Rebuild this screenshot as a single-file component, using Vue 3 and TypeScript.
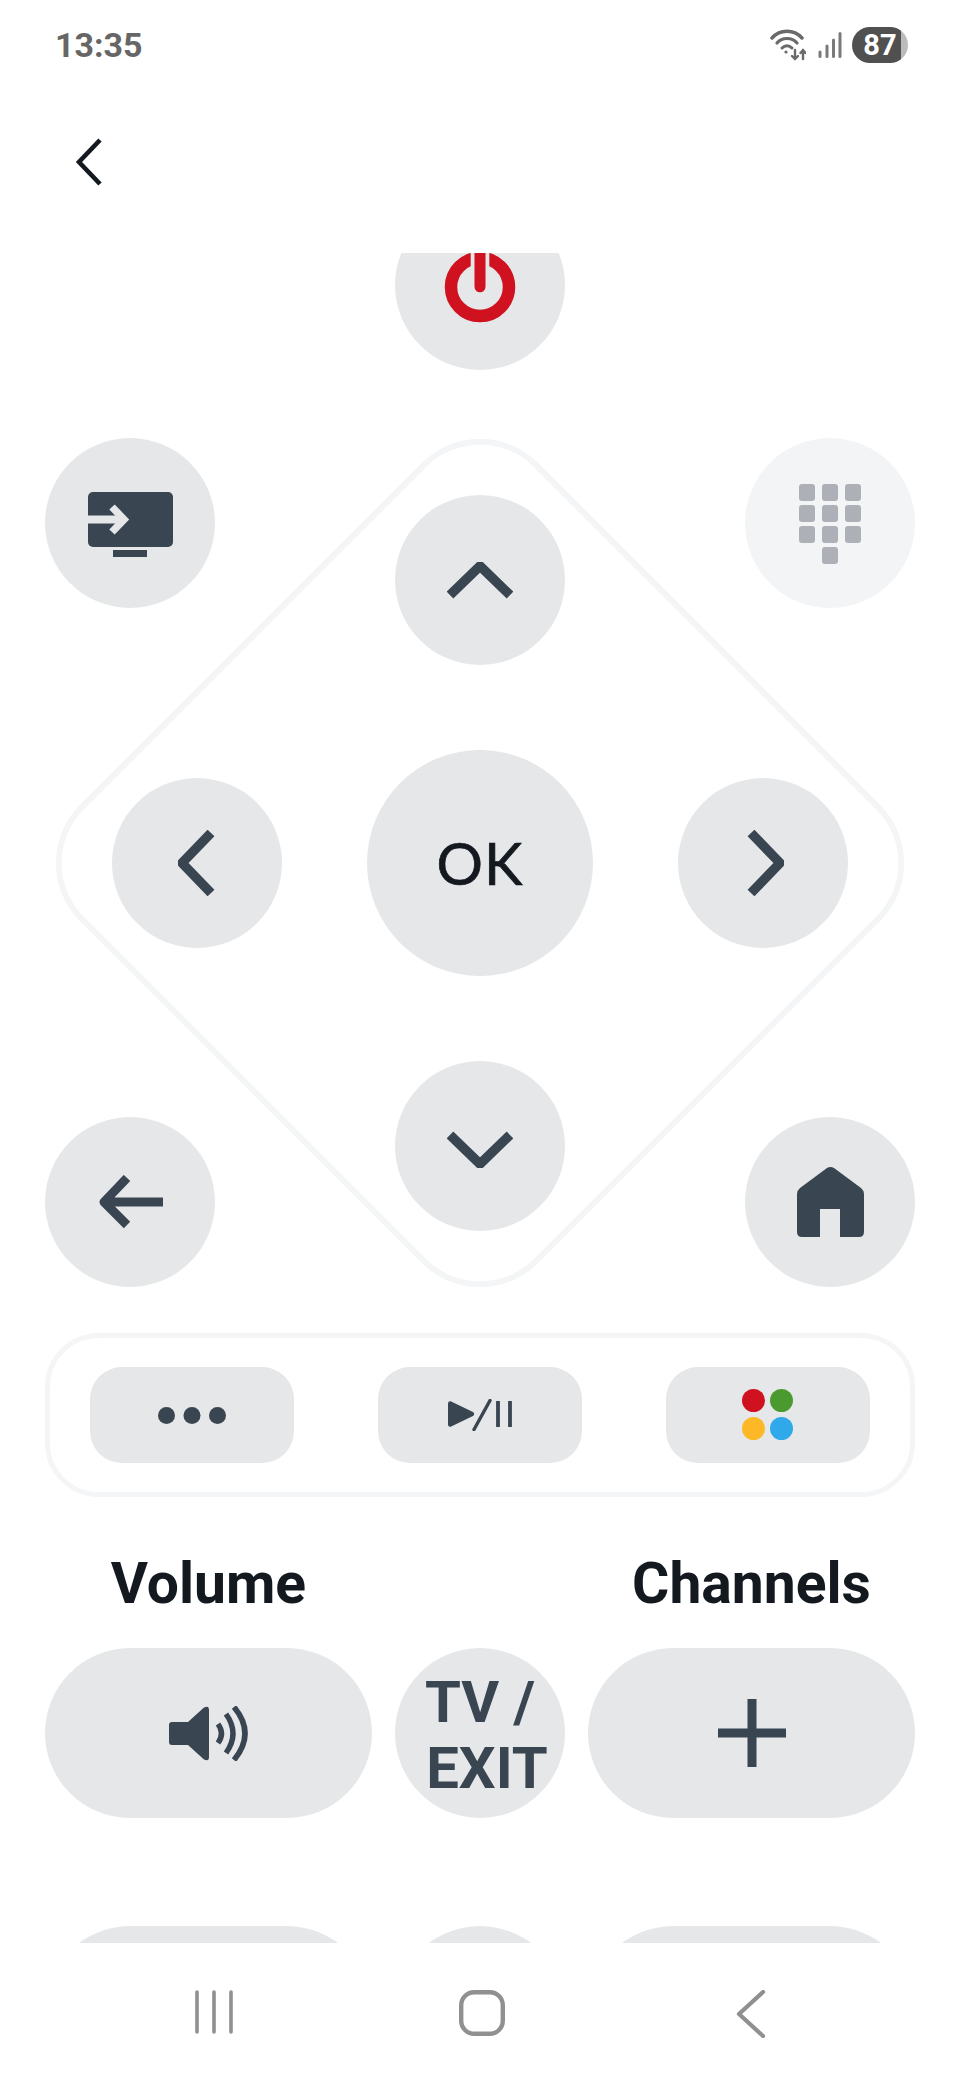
<template>
  <div class="screen">
    <div class="status-bar">
      <span class="clock">13:35</span>
      <div class="status-icons">
        <svg class="wifi" width="36" height="32" viewBox="0 0 36 32" fill="none" stroke="#6a6a6a" stroke-linecap="round">
          <path d="M2 9 C10 0 24 0 32 9" stroke-width="3.4" />
          <path d="M7 14 C12 8 22 8 27 14" stroke-width="3.2" />
          <path d="M12 19 C15 16 19 16 22 19" stroke-width="3" />
          <circle cx="16" cy="23" r="1.6" fill="#6a6a6a" stroke="none" />
          <path d="M25 21 V30 M22 27 L25 30 L28 27" stroke-width="2.4" />
          <path d="M33 30 V21 M30.5 24 L33 21 L35.5 24" stroke-width="2.4" />
        </svg>
        <svg class="signal" width="24" height="26" viewBox="0 0 24 26" fill="none" stroke="#7a7a7a" stroke-width="3" stroke-linecap="round">
          <path d="M2 20 V24.5 M9 14 V24.5 M15.5 8 V24.5 M22 1.5 V24.5" />
        </svg>
        <div class="battery"><span>87</span></div>
      </div>
    </div>

    <header class="top-bar">
      <button class="plain-button" type="button" aria-label="Back">
        <svg width="28" height="48" viewBox="0 0 28 48" fill="none" stroke="#14181f" stroke-width="4.6">
          <path d="M25 2 L4 24 L25 46" />
        </svg>
      </button>
    </header>

    <main class="viewport">
      <div class="remote">
        <button class="round-button power" type="button" aria-label="Power">
          <svg width="72" height="72" viewBox="0 0 72 72" fill="none">
            <circle cx="36" cy="36" r="29" stroke="#d0111f" stroke-width="12.5" />
            <rect x="26.7" y="0" width="18.6" height="18" fill="#e5e7e9" />
            <path d="M36 0 V35.8" stroke="#d0111f" stroke-width="11" stroke-linecap="round" />
          </svg>
        </button>

        <div class="pad">
          <div class="pad-outline"></div>

          <button class="round-button corner corner-tl" type="button" aria-label="Source">
            <svg width="85" height="65" viewBox="0 0 85 65" fill="none">
              <rect width="85" height="55" rx="5" fill="#3a4552" />
              <rect x="25" y="58" width="34" height="7" fill="#3a4552" />
              <path d="M0 27.5 H34" stroke="#e5e7e9" stroke-width="8" />
              <path d="M24 15 L36 27.5 L24 40" stroke="#e5e7e9" stroke-width="7.5" />
            </svg>
          </button>
          <button class="round-button corner corner-tr muted" type="button" aria-label="Keypad">
            <svg width="62" height="80" viewBox="0 0 62 80" fill="#adb0b6">
              <rect v-for="key in keypadKeys" :key="key.id" :x="key.x" :y="key.y" width="16" height="17" rx="3" />
            </svg>
          </button>
          <button class="round-button corner corner-bl" type="button" aria-label="Return">
            <svg class="return-icon" width="64" height="54" viewBox="0 0 64 54" fill="none" stroke="#3a4552" stroke-width="9">
              <path d="M28 3 L5 27 L28 50 M5 27 H64" stroke-linejoin="round" />
            </svg>
          </button>
          <button class="round-button corner corner-br" type="button" aria-label="Home">
            <svg width="67" height="70" viewBox="0 0 67 70" fill="#3a4552">
              <path d="M30 1 Q33.5 -1 37 1 L64 21 Q67 23.5 67 27 V65 Q67 70 62 70 H43 V42 H23 V70 H5 Q0 70 0 65 V27 Q0 23.5 3 21 Z" />
            </svg>
          </button>

          <div class="cluster">
            <button class="round-button" type="button" aria-label="Up">
              <svg class="arrow arrow-up" width="38" height="66" viewBox="0 0 38 66" fill="none" stroke="#3a4552" stroke-width="9.5">
                <path d="M33 3 L4 33 L33 63" stroke-linejoin="round" />
              </svg>
            </button>
            <div class="cluster-row">
              <button class="round-button" type="button" aria-label="Left">
                <svg class="arrow" width="38" height="66" viewBox="0 0 38 66" fill="none" stroke="#3a4552" stroke-width="9.5">
                  <path d="M33 3 L4 33 L33 63" stroke-linejoin="round" />
                </svg>
              </button>
              <button class="round-button ok" type="button">OK</button>
              <button class="round-button" type="button" aria-label="Right">
                <svg class="arrow arrow-right" width="38" height="66" viewBox="0 0 38 66" fill="none" stroke="#3a4552" stroke-width="9.5">
                  <path d="M33 3 L4 33 L33 63" stroke-linejoin="round" />
                </svg>
              </button>
            </div>
            <button class="round-button" type="button" aria-label="Down">
              <svg class="arrow arrow-down" width="38" height="66" viewBox="0 0 38 66" fill="none" stroke="#3a4552" stroke-width="9.5">
                <path d="M33 3 L4 33 L33 63" stroke-linejoin="round" />
              </svg>
            </button>
          </div>
        </div>

        <div class="media-bar">
          <button class="media-button" type="button" aria-label="More">
            <svg width="68" height="17" viewBox="0 0 68 17" fill="#3a4552">
              <circle cx="8.5" cy="8.5" r="8.5" />
              <circle cx="34" cy="8.5" r="8.5" />
              <circle cx="59.5" cy="8.5" r="8.5" />
            </svg>
          </button>
          <button class="media-button" type="button" aria-label="Play or pause">
            <svg width="64" height="32" viewBox="0 0 64 32" fill="none" stroke="#3a4552">
              <path d="M2.2 4.5 L24 15 L2.2 25.5 Z" fill="#3a4552" stroke-width="4.4" stroke-linejoin="round" />
              <path d="M26 30.5 L42 1.5" stroke-width="3.4" stroke-linecap="round" />
              <path d="M50 2 V28 M62 2 V28" stroke-width="3.8" />
            </svg>
          </button>
          <button class="media-button" type="button" aria-label="Colour keys">
            <svg width="52" height="52" viewBox="0 0 52 52">
              <circle cx="11.5" cy="11.5" r="11.5" fill="#d0111f" />
              <circle cx="39.5" cy="11.5" r="11.5" fill="#4a9a2f" />
              <circle cx="11.5" cy="39.5" r="11.5" fill="#fdb827" />
              <circle cx="39.5" cy="39.5" r="11.5" fill="#2fa9ea" />
            </svg>
          </button>
        </div>

        <div class="rocker-labels">
          <span>Volume</span>
          <span></span>
          <span>Channels</span>
        </div>

        <div class="rocker-row">
          <button class="pill-button" type="button" aria-label="Volume up">
            <svg width="80" height="55" viewBox="0 0 80 55" fill="none" stroke="#3a4552">
              <path d="M3 16 H19 L35 1.5 Q40 -1 40 4 V51 Q40 56 35 53.5 L19 39 H3 Q0 39 0 36 V19 Q0 16 3 16 Z" fill="#3a4552" stroke="none" />
              <path d="M49 18 Q56 27.5 49 37" stroke-width="5.4" />
              <path d="M57 8 Q71 27.5 57 47" stroke-width="5.4" />
              <path d="M65 1 Q87 27.5 65 54" stroke-width="5.6" />
            </svg>
          </button>
          <button class="round-button tv-exit" type="button">
            <span>TV /</span>
            <span class="exit-line">EXIT</span>
          </button>
          <button class="pill-button" type="button" aria-label="Channel up">
            <svg width="68" height="68" viewBox="0 0 68 68" stroke="#3a4552" stroke-width="9">
              <path d="M34 0 V68 M0 34 H68" />
            </svg>
          </button>
        </div>

        <div class="rocker-row rocker-row-lower">
          <button class="pill-button" type="button" aria-label="Volume down"></button>
          <button class="round-button" type="button" aria-label="Mute"></button>
          <button class="pill-button" type="button" aria-label="Channel down"></button>
        </div>
      </div>
    </main>

    <nav class="nav-bar">
      <svg width="40" height="44" viewBox="0 0 40 44" stroke="#909090" stroke-width="3.6" stroke-linecap="round">
        <path d="M3 2 V42 M20 2 V42 M37 2 V42" />
      </svg>
      <svg class="nav-home" width="46" height="46" viewBox="0 0 46 46" fill="none" stroke="#909090" stroke-width="4.4">
        <rect x="2.2" y="2.2" width="41.6" height="41.6" rx="13" />
      </svg>
      <svg width="30" height="48" viewBox="0 0 30 48" fill="none" stroke="#909090" stroke-width="4.2" stroke-linecap="round" stroke-linejoin="round">
        <path d="M27 2 L3 24 L27 46" />
      </svg>
    </nav>
  </div>
</template>

<script setup lang="ts">
const keypadKeys: { id: number; x: number; y: number }[] = [];

for (let row = 0; row < 3; row++) {
  for (let col = 0; col < 3; col++) {
    keypadKeys.push({ id: row * 3 + col, x: col * 23, y: row * 21 });
  }
}
keypadKeys.push({ id: 9, x: 23, y: 63 });
</script>

<style>
html,
body {
  margin: 0;
  background: #ffffff;
}
</style>

<style scoped>
.screen {
  width: 960px;
  height: 2080px;
  display: flex;
  flex-direction: column;
  background: #ffffff;
  overflow: hidden;
  font-family: Roboto, "Liberation Sans", sans-serif;
}

button {
  padding: 0;
  border: 0;
  font-family: inherit;
  cursor: pointer;
}

.status-bar {
  height: 90px;
  flex: none;
  box-sizing: border-box;
  padding: 0 52px 0 55px;
  display: flex;
  align-items: center;
  justify-content: space-between;
}

.clock {
  color: #666666;
  font-size: 34px;
  font-weight: 700;
}

.status-icons {
  display: flex;
  align-items: center;
  gap: 10px;
}

.wifi {
  margin-right: 2px;
}

.battery {
  width: 56px;
  height: 36px;
  border-radius: 18px;
  background: linear-gradient(90deg, #505050 87%, #bcbcbc 87%);
  color: #ffffff;
  font-size: 29px;
  font-weight: 700;
  display: flex;
  align-items: center;
  justify-content: center;
}

.top-bar {
  height: 163px;
  flex: none;
  box-sizing: border-box;
  padding: 48px 0 0 75px;
}

.plain-button {
  display: block;
  background: none;
}

.viewport {
  height: 1690px;
  flex: none;
  overflow: hidden;
}

.remote {
  margin-top: -53px;
  padding: 0 45px;
  display: flex;
  flex-direction: column;
}

.round-button {
  width: 170px;
  height: 170px;
  flex: none;
  border-radius: 50%;
  background: #e5e7e9;
  display: flex;
  align-items: center;
  justify-content: center;
}

.power {
  align-self: center;
  margin-bottom: 68px;
}

.power svg {
  margin-top: 3px;
}

.pad {
  position: relative;
  height: 849px;
  display: grid;
}

.pad > * {
  grid-area: 1 / 1;
}

.pad-outline {
  position: absolute;
  left: 50%;
  top: 50%;
  width: 648px;
  height: 648px;
  box-sizing: border-box;
  border: 6px solid #f4f5f6;
  border-radius: 82px;
  transform: translate(-50%, -50%) rotate(45deg);
}

.corner-tl {
  justify-self: start;
  align-self: start;
  padding-top: 2px;
}

.corner-tr {
  justify-self: end;
  align-self: start;
  padding-top: 2px;
}

.corner-bl {
  justify-self: start;
  align-self: end;
}

.corner-br {
  justify-self: end;
  align-self: end;
}

.muted {
  background: #f3f4f6;
}

.return-icon {
  margin-left: 2px;
}

.cluster {
  position: relative;
  justify-self: center;
  align-self: center;
  display: flex;
  flex-direction: column;
  align-items: center;
  gap: 85px;
}

.cluster-row {
  display: flex;
  align-items: center;
  gap: 85px;
}

.arrow-up {
  transform: translateY(1px) rotate(90deg);
}

.arrow-right {
  transform: translateX(2px) rotate(180deg);
}

.arrow-down {
  transform: translateY(3px) rotate(270deg);
}

.ok {
  width: 226px;
  height: 226px;
  color: #14181f;
  font-family: Lato, sans-serif;
  font-size: 58px;
  font-weight: 400;
  letter-spacing: 1px;
  -webkit-text-stroke: 0.7px #14181f;
}

.media-bar {
  margin-top: 46px;
  height: 164px;
  box-sizing: border-box;
  padding: 0 40px;
  border: 5px solid #f4f5f6;
  border-radius: 54px;
  display: flex;
  align-items: center;
  justify-content: space-between;
}

.media-button {
  width: 204px;
  height: 96px;
  border-radius: 32px;
  background: #e5e7e9;
  display: flex;
  align-items: center;
  justify-content: center;
}

.rocker-labels,
.rocker-row {
  display: grid;
  grid-template-columns: 327px 170px 327px;
  column-gap: 23px;
}

.rocker-labels {
  margin-top: 54px;
  height: 97px;
  color: #14181f;
  font-size: 57px;
  font-weight: 700;
  line-height: 66px;
  text-align: center;
}

.pill-button {
  height: 170px;
  border-radius: 85px;
  background: #e5e7e9;
  display: flex;
  align-items: center;
  justify-content: center;
}

.tv-exit {
  box-sizing: border-box;
  padding-top: 4px;
  flex-direction: column;
  color: #3a4552;
  font-size: 58px;
  font-weight: 700;
  line-height: 66px;
  white-space: nowrap;
}

.exit-line {
  margin-left: 14px;
}

.rocker-row-lower {
  margin-top: 108px;
}

.nav-bar {
  flex: 1;
  box-sizing: border-box;
  padding: 47px 194px 45px 194px;
  display: flex;
  align-items: flex-start;
  justify-content: space-between;
}

.nav-home {
  margin-right: 6px;
}
</style>
